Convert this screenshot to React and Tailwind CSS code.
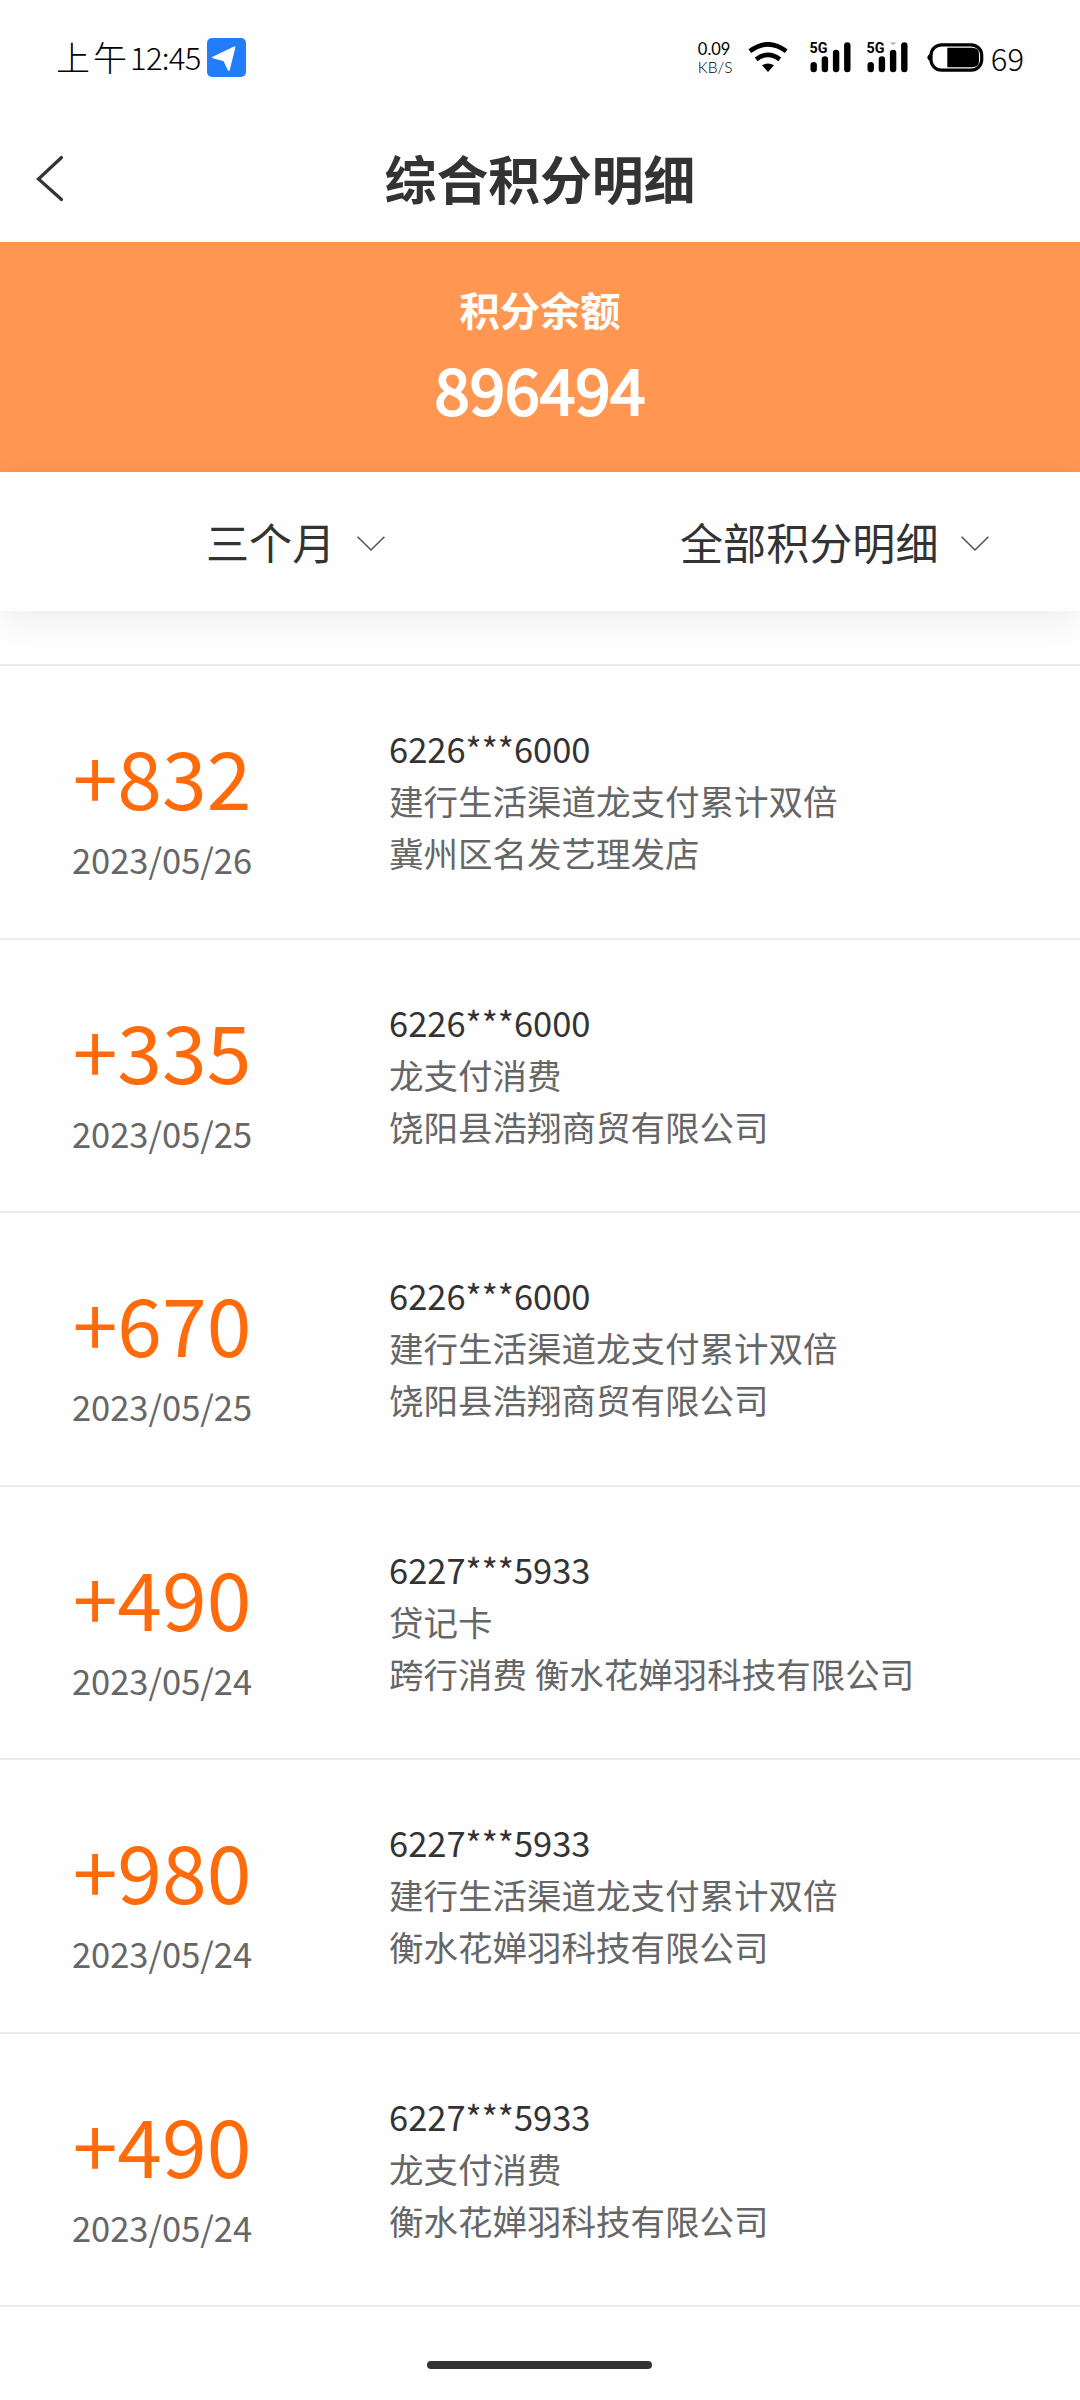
import React from 'react';

const records = [
  { points: '+832', date: '2023/05/26', card: '6226***6000', type: '建行生活渠道龙支付累计双倍', shop: '冀州区名发艺理发店' },
  { points: '+335', date: '2023/05/25', card: '6226***6000', type: '龙支付消费', shop: '饶阳县浩翔商贸有限公司' },
  { points: '+670', date: '2023/05/25', card: '6226***6000', type: '建行生活渠道龙支付累计双倍', shop: '饶阳县浩翔商贸有限公司' },
  { points: '+490', date: '2023/05/24', card: '6227***5933', type: '贷记卡', shop: '跨行消费 衡水花婵羽科技有限公司' },
  { points: '+980', date: '2023/05/24', card: '6227***5933', type: '建行生活渠道龙支付累计双倍', shop: '衡水花婵羽科技有限公司' },
  { points: '+490', date: '2023/05/24', card: '6227***5933', type: '龙支付消费', shop: '衡水花婵羽科技有限公司' },
];

const LocationIcon = () => (
  <svg className="w-[39px] h-[39px] ml-[6px]" viewBox="0 0 39 39">
    <rect width="39" height="39" rx="5" fill="#217dfb" />
    <path d="M6 19.5 27.5 9.2 21.8 32 17.2 22.3Z" fill="#fff" stroke="#fff" strokeWidth="1.8" strokeLinejoin="round" />
  </svg>
);

const WifiIcon = () => (
  <svg className="w-[40px] h-[31px]" viewBox="0 0 40 31">
    <path d="M1.8 9.2Q20-4.6 38.2 9.2" fill="none" stroke="#000" strokeWidth="4.6" />
    <path d="M8.2 17.3Q20 8.6 31.8 17.3" fill="none" stroke="#000" strokeWidth="4.6" />
    <path d="M14 23.2Q20 19.6 26 23.2L20 30Z" fill="#000" />
  </svg>
);

const SignalIcon = ({ marker }) => (
  <svg className="w-[41px] h-[31px] overflow-visible" viewBox="0 0 41 31">
    <text x="-0.5" y="11" fontSize="15" fontWeight="700" fontFamily="Roboto, sans-serif" textLength="18" lengthAdjust="spacingAndGlyphs">5G</text>
    <rect x="0.5" y="20" width="6.4" height="10.3" rx="3.2" />
    <rect x="11.7" y="14.3" width="6.4" height="16" rx="3.2" />
    <rect x="22.9" y="7.8" width="6.4" height="22.5" rx="3.2" />
    <rect x="34.1" y="0.3" width="6.4" height="30" rx="3.2" />
    {marker && <path d="M22.8 0.3h6.6L26.1 3.6Z" fill="#bbb" />}
  </svg>
);

const BatteryIcon = () => (
  <svg className="w-[57px] h-[29px]" viewBox="0 0 57 29">
    <path d="M4 10.3Q0.4 12 0.4 14.5T4 18.7Z" />
    <rect x="4" y="1.8" width="50.7" height="25.4" rx="10.5" fill="#fff" stroke="#000" strokeWidth="3.2" />
    <path d="M20.3 4.8H45Q52 4.8 52 11V18Q52 24.2 45 24.2H20.3Z" />
  </svg>
);

const ChevronDown = () => (
  <svg className="w-[28px] h-[16px] mt-[5px]" viewBox="0 0 28 16">
    <path d="M0.6 0.8 14 14 27.4 0.8" fill="none" stroke="#555" strokeWidth="1.6" />
  </svg>
);

const App = () => {
  return (
    <div className="w-[1080px] h-[2400px] overflow-hidden bg-[#fefefe] font-['Noto_Sans_CJK_SC',sans-serif] text-[#333]">
      {/* Status bar */}
      <div className="flex items-center h-[115px] pl-[56px] text-black">
        <span className="text-[34px] leading-none font-light tracking-[3px] -mt-[2px]">上午</span>
        <span className="text-[31px] leading-none font-light tracking-[-0.7px] -mt-[2px]">12:45</span>
        <LocationIcon />
        <div className="flex items-center ml-auto mr-[56px]">
          <div className="flex flex-col w-[36px] mr-[14px] font-['Lato',sans-serif]">
            <span className="text-[16.5px] leading-[19px]">0.09</span>
            <span className="text-[15.5px] leading-[17px] font-light">KB/S</span>
          </div>
          <WifiIcon />
          <div className="flex gap-[16px] ml-[22px] mr-[19px]">
            <SignalIcon />
            <SignalIcon marker />
          </div>
          <BatteryIcon />
          <span className="ml-[7px] -mt-[1px] text-[31px] leading-none font-light">69</span>
        </div>
      </div>

      {/* Title */}
      <header className="grid grid-cols-[100px_1fr_100px] items-center h-[127px]">
        <svg className="w-[28px] h-[48px] ml-[36px]" viewBox="0 0 28 48">
          <path d="M25.5 2.5 2.5 24 25.5 44.5" fill="none" stroke="#333" strokeWidth="3.2" strokeLinecap="round" />
        </svg>
        <h1 className="text-center text-[51.8px] leading-none font-bold -mt-[2px]">综合积分明细</h1>
      </header>

      {/* Balance */}
      <section className="flex flex-col items-center h-[230px] pt-[37px] bg-[#ff9652] text-white">
        <span className="text-[40.3px] leading-[60px] font-bold">积分余额</span>
        <span className="text-[63.4px] leading-[97px] [-webkit-text-stroke:2.2px_white]">896494</span>
      </section>

      {/* Filters */}
      <div className="relative flex h-[139px] bg-[#fefefe] shadow-[0_9px_32px_rgba(0,0,0,0.065)] text-[43.1px] leading-none">
        <div className="flex items-center w-[540px] pl-[206px] gap-[22px]">
          <span>三个月</span>
          <ChevronDown />
        </div>
        <div className="flex items-center w-[540px] pl-[140px] gap-[22px]">
          <span>全部积分明细</span>
          <ChevronDown />
        </div>
      </div>

      {/* Records */}
      <ul className="pt-[53px]">
        <li className="h-[2px] bg-[#ececec]"></li>
        {records.map((item, index) => (
          <li key={index} className="flex h-[273.5px] border-b-2 border-[#ececec] pt-[56px] text-[34.5px]">
            <div className="flex flex-col items-center w-[324px] text-[#666]">
              <span className="text-[80.5px] leading-[106px] text-[#ff6b0a]">{item.points}</span>
              <span className="pt-[5px] leading-[52px]">{item.date}</span>
            </div>
            <div className="flex flex-col ml-[65px] leading-[52px] text-[#666]">
              <span className="text-[#333]">{item.card}</span>
              <span>{item.type}</span>
              <span>{item.shop}</span>
            </div>
          </li>
        ))}
      </ul>

      {/* Home indicator */}
      <div className="w-[225px] h-[8px] mt-[54px] ml-[427px] rounded-full bg-[#333]"></div>
    </div>
  );
};

export default App;
